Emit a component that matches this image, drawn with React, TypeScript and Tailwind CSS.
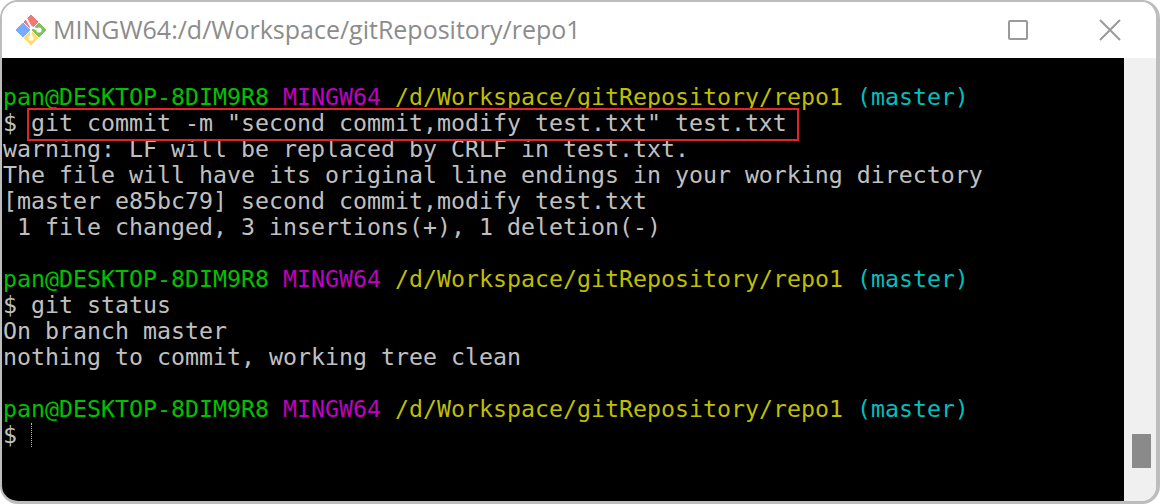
import React from 'react';

const Prompt = () => (
    <div>
        <span className="text-[#00c000]">pan@DESKTOP-8DIM9R8</span>{' '}
        <span className="text-[#bf00bf]">MINGW64</span>{' '}
        <span className="text-[#bfbf00]">/d/Workspace/gitRepository/repo1</span>{' '}
        <span className="text-[#00bfbf]">(master)</span>
    </div>
);

const Line = ({ text }: { text: string }) => <div className="h-[26px]">{text}</div>;

const GitLogo = () => (
    <svg width="32" height="32" viewBox="0 0 32 32" className="shrink-0">
        <path d="M16 1 L23 8 L16 15 L9 8 Z" fill="#f27878" stroke="#f27878" strokeLinejoin="round" />
        <path d="M24 9 L31 16 L24 23 L17 16 Z" fill="#7cc35a" stroke="#7cc35a" strokeLinejoin="round" />
        <path d="M16 17 L23 24 L16 31 L9 24 Z" fill="#ffdc6e" stroke="#ffdc6e" strokeLinejoin="round" />
        <path d="M8 9 L15 16 L8 23 L1 16 Z" fill="#78aaff" stroke="#78aaff" strokeLinejoin="round" />
        <path d="M11 4 L16 13 L16 24 M16 13 L24 16" stroke="#ffffff" strokeWidth="2" fill="none" />
        <circle cx="24" cy="16" r="2.6" fill="#ffffff" />
        <circle cx="16" cy="24" r="2.6" fill="#ffffff" />
    </svg>
);

export default function App() {
    return (
        <div className="w-[1160px] h-[504px] bg-white overflow-hidden">
            <div className="w-full h-full flex flex-col rounded-[18px] border-2 border-r-[4px] border-b-[3px] border-[#bdbdbd] overflow-hidden">
                <div className="h-[56px] shrink-0 bg-white flex items-center pl-[13px]">
                    <GitLogo />
                    <span className="ml-[6px] text-[25px] text-[#8c8c8c] font-['Open_Sans',sans-serif]">
                        MINGW64:/d/Workspace/gitRepository/repo1
                    </span>
                    <div className="ml-auto flex items-center">
                        <div className="w-[20px] h-[20px] rounded-[2px] border-2 border-[#9a9a9a] mr-[71px]" />
                        <svg width="22" height="22" viewBox="0 0 22 22" className="mr-[35px]">
                            <path d="M1 1 L21 21 M21 1 L1 21" stroke="#9a9a9a" strokeWidth="2" />
                        </svg>
                    </div>
                </div>
                <div className="flex-1 flex min-h-0">
                    <div className="relative flex-1 bg-black pl-px pt-[26px] font-['DejaVu_Sans_Mono',monospace] text-[23.25px] leading-[26px] text-[#c0c0c0] whitespace-pre">
                        <Prompt />
                        <Line text="$ git commit -m &quot;second commit,modify test.txt&quot; test.txt" />
                        <Line text="warning: LF will be replaced by CRLF in test.txt." />
                        <Line text="The file will have its original line endings in your working directory" />
                        <Line text="[master e85bc79] second commit,modify test.txt" />
                        <Line text=" 1 file changed, 3 insertions(+), 1 deletion(-)" />
                        <Line text="" />
                        <Prompt />
                        <Line text="$ git status" />
                        <Line text="On branch master" />
                        <Line text="nothing to commit, working tree clean" />
                        <Line text="" />
                        <Prompt />
                        <Line text="$" />
                        <div className="absolute left-[25px] top-[50px] w-[772px] h-[33px] border-2 border-[#e5222a]" />
                        <div className="absolute left-[29px] top-[365px] h-[24px] border-l border-dotted border-[#c0c0c0]" />
                    </div>
                    <div className="relative w-[32px] shrink-0 bg-[#f0f0f0]">
                        <div className="absolute left-[8px] top-[376px] w-[19px] h-[34px] bg-[#8a8a8a]" />
                    </div>
                </div>
            </div>
        </div>
    );
}
